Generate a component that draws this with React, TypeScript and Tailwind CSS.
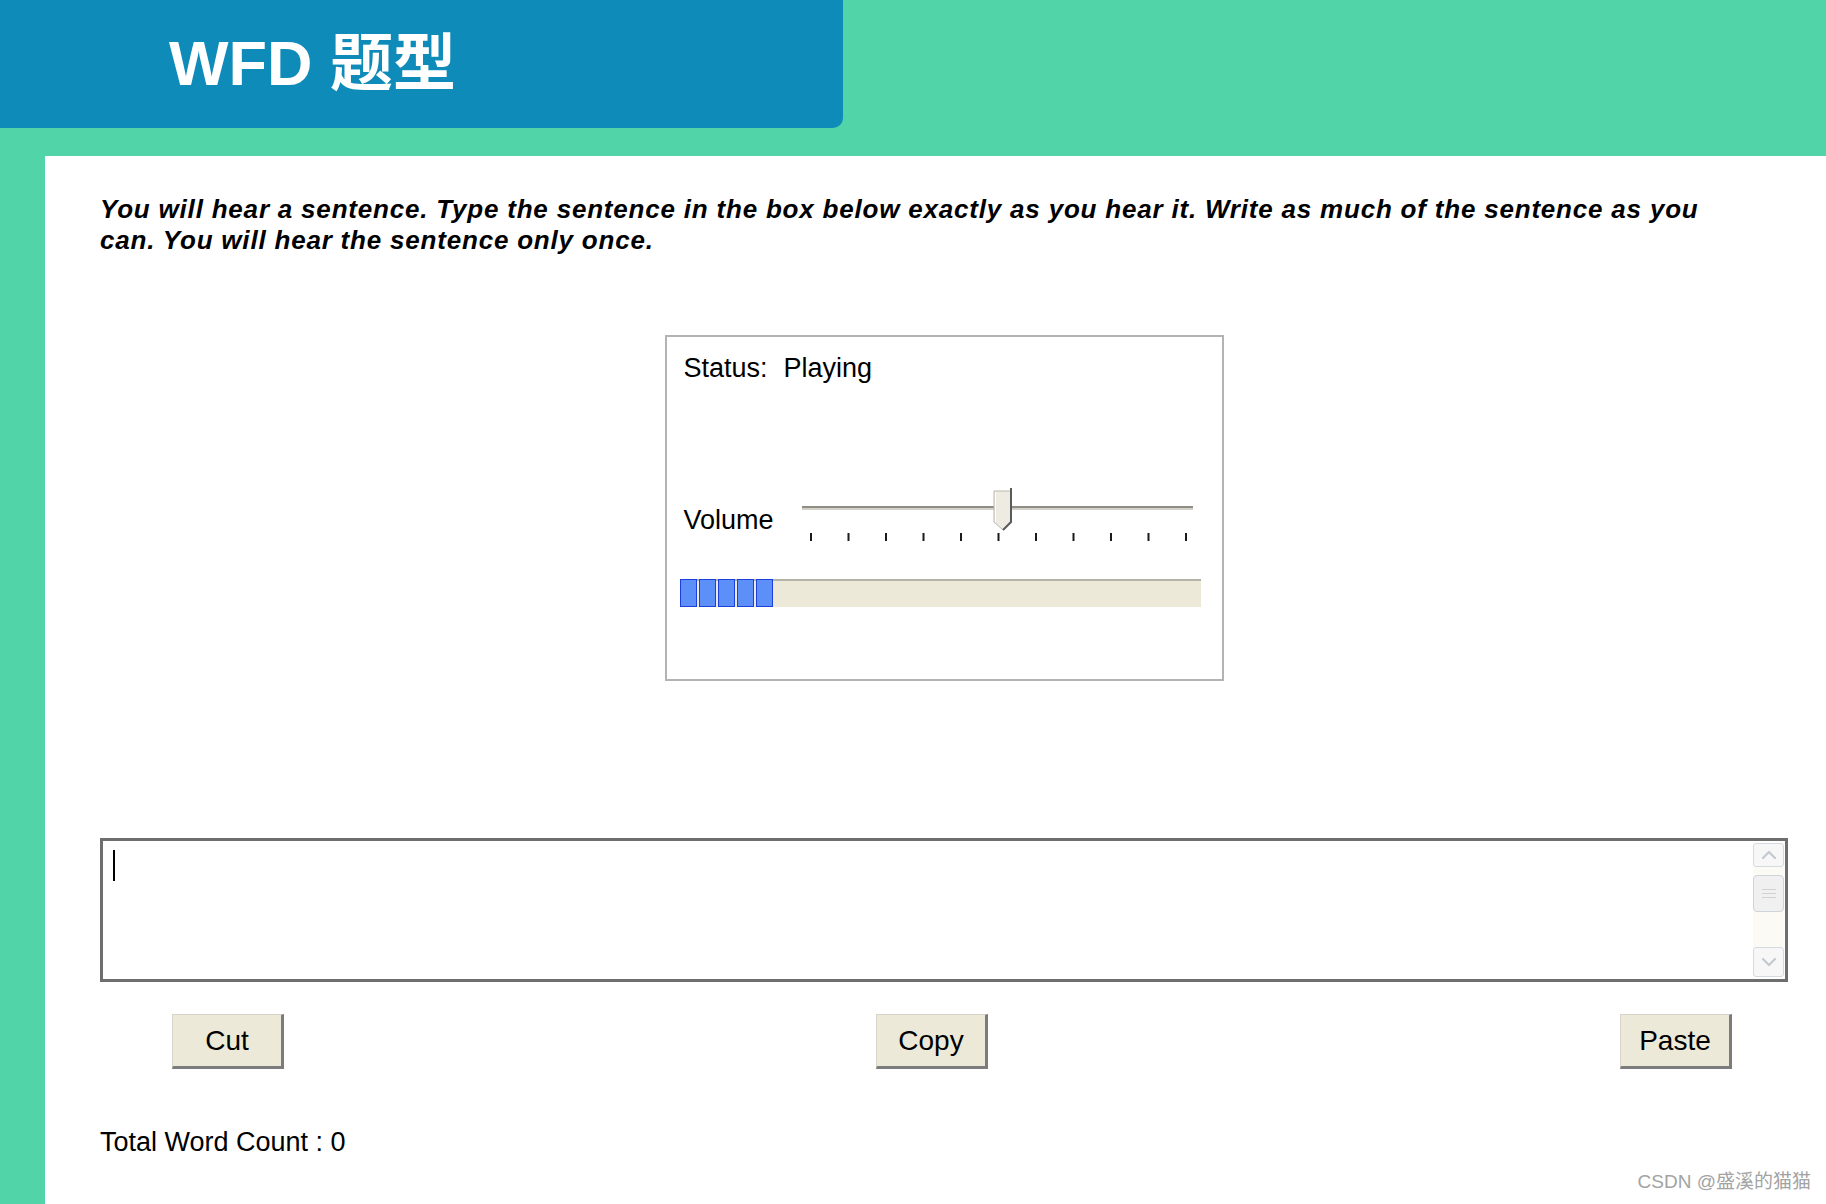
import { ChevronDown, ChevronUp } from "lucide-react";

const ticks = Array.from({ length: 11 }, (_, i) => 13 + i * 37.5);

const VolumeSlider = () => (
  <svg width="400" height="56" viewBox="0 0 400 56" className="block">
    <rect x="5" y="19" width="391" height="2" fill="#8f8e86" />
    <rect x="5" y="21" width="391" height="2" fill="#d4d2c8" />
    {ticks.map((x) => (
      <rect key={x} x={x} y="46" width="2" height="8" fill="#1a1a1a" />
    ))}
    <path d="M197 4 H214 V35 L206 43 L197 35 Z" fill="#eeece2" stroke="#b9b7ad" strokeWidth="1" />
    <line x1="198.5" y1="5" x2="198.5" y2="35" stroke="#ffffff" strokeWidth="1" />
    <path d="M214 1 V35 L206 43" fill="none" stroke="#5a5a5a" strokeWidth="2" />
  </svg>
);

const XpButton = ({ label, className }: { label: string; className?: string }) => (
  <button
    className={`h-[55px] w-[112px] bg-[#ece9d8] border-l border-t border-[#d6d4ca] border-r-[3px] border-b-[3px] border-r-[#7c7c7c] border-b-[#7c7c7c] text-[28px] leading-none text-black ${className ?? ""}`}
  >
    {label}
  </button>
);

export default function App() {
  return (
    <div className="relative flex min-h-[1204px] w-full flex-col bg-[#50d4a8] font-['Liberation_Sans','Noto_Sans_CJK_SC',sans-serif]">
      {/* header tab */}
      <div className="flex h-[128px] w-[843px] items-center rounded-br-[10px] bg-[#0e8bb8] pb-[8px] pl-[169px]">
        <h1 className="text-[63px] font-bold leading-none text-white">
          WFD <span className="font-['Noto_Sans_CJK_SC',sans-serif]">题型</span>
        </h1>
      </div>

      {/* main panel */}
      <div className="ml-[45px] mt-[28px] flex-1 bg-white pl-[55px] pr-[38px] pt-[38px]">
        <p className="w-[1640px] text-[26px] font-bold italic leading-[31px] tracking-[0.8px] text-black">
          You will hear a sentence. Type the sentence in the box below exactly as you hear it. Write as much of the
          sentence as you can. You will hear the sentence only once.
        </p>

        {/* audio player */}
        <div className="mx-auto mt-[79px] flex h-[346px] w-[559px] flex-col border-2 border-[#b3b3b3] text-[27px] text-black">
          <div className="mt-[16px] flex pl-[17px] leading-[30px]">
            <span>Status:</span>
            <span className="ml-[16px]">Playing</span>
          </div>

          <div className="mt-[104px] flex h-[56px] items-start pl-[17px]">
            <span className="mt-[18px] w-[113px] leading-[30px]">Volume</span>
            <VolumeSlider />
          </div>

          <div className="ml-[13px] mt-[36px] flex h-[28px] w-[521px] gap-[2px] border-t-2 border-[#b5b3a8] bg-[#ece9d8]">
            {[0, 1, 2, 3, 4].map((i) => (
              <div key={i} className="-mt-[2px] h-[28px] w-[17px] border-[1.5px] border-[#1c3fe0] bg-[#5c8ff7]" />
            ))}
          </div>
        </div>

        {/* answer box */}
        <div className="mt-[157px] flex h-[144px] w-[1688px] border-[3px] border-[#6e6e6e] bg-white">
          <div className="flex-1 pl-[10px] pt-[9px]">
            <div className="h-[31px] w-[2px] bg-black" />
          </div>
          <div className="mr-[1px] flex w-[31px] flex-col py-[2px]">
            <div className="flex h-[24px] items-center justify-center rounded-[3px] border border-[#d5d9e0] bg-[#f7f7f7]">
              <ChevronUp size={24} strokeWidth={2.2} className="text-[#c4c8cf]" />
            </div>
            <div className="flex-1 bg-[#fbfaf4] pt-[8px]">
              <div className="flex h-[37px] flex-col items-center justify-center gap-[3px] rounded-[4px] border border-[#cfd3da] bg-[#f0f0f0]">
                <div className="h-px w-[14px] bg-[#d2d2d2]" />
                <div className="h-px w-[14px] bg-[#d2d2d2]" />
                <div className="h-px w-[14px] bg-[#d2d2d2]" />
              </div>
            </div>
            <div className="flex h-[30px] items-center justify-center rounded-[3px] border border-[#d5d9e0] bg-[#f7f7f7]">
              <ChevronDown size={24} strokeWidth={2.2} className="text-[#c4c8cf]" />
            </div>
          </div>
        </div>

        {/* edit buttons */}
        <div className="mt-[32px] flex w-[1688px]">
          <XpButton label="Cut" className="ml-[72px]" />
          <XpButton label="Copy" className="ml-[592px]" />
          <XpButton label="Paste" className="ml-auto mr-[56px]" />
        </div>

        <div className="mt-[58px] text-[27px] leading-[30px] text-black">Total Word Count : 0</div>
      </div>

      <div className="absolute bottom-[8px] right-[15px] text-[19px] text-[#a3a3a3]">CSDN @盛溪的猫猫</div>
    </div>
  );
}
